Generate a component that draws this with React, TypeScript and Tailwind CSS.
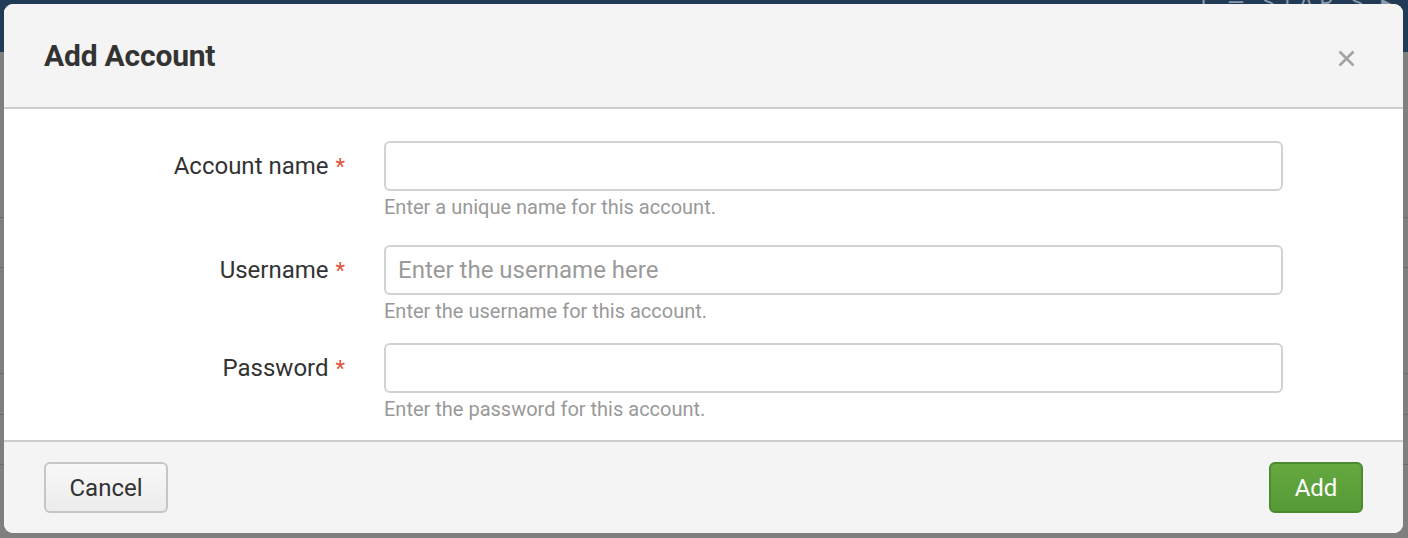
const fields = [
  {
    label: 'Account name',
    placeholder: '',
    help: 'Enter a unique name for this account.',
    gap: 'mb-[28px]',
  },
  {
    label: 'Username',
    placeholder: 'Enter the username here',
    help: 'Enter the username for this account.',
    gap: 'mb-[22px]',
  },
  {
    label: 'Password',
    placeholder: '',
    help: 'Enter the password for this account.',
    gap: '',
  },
]

function Backdrop() {
  return (
    <div className="flex h-full flex-col">
      <div className="relative h-[52px] bg-[#213a55]">
        <span className="absolute right-[10px] top-[-14px] text-[22px] tracking-[6px] text-[#8c9aab]">
          T — STAR S ▸
        </span>
      </div>
      <div className="flex-1 bg-[#7f7f7f]">
        <div className="h-[166px] border-b border-[#6c6c6c]" />
        <div className="h-[50px] border-b border-[#6c6c6c] text-[22px] leading-[50px] text-[#111] -ml-[8px]">
          t
        </div>
        <div className="h-[106px] border-b border-[#6c6c6c]" />
        <div className="h-[41px] border-b border-[#6c6c6c]" />
        <div className="h-[50px] border-b border-[#6c6c6c]" />
      </div>
    </div>
  )
}

export default function App() {
  return (
    <div
      className="relative h-[538px] w-full overflow-hidden"
      style={{ fontFamily: 'Roboto, "Liberation Sans", sans-serif' }}
    >
      <Backdrop />

      <div className="absolute left-[4px] top-[4px] flex h-[529px] w-[1399px] flex-col overflow-hidden rounded-[9px] bg-white">
        <div className="flex h-[105px] items-center justify-between border-b-2 border-[#cdcdcd] bg-[#f4f4f4] pl-[40px] pr-[48px]">
          <h2 className="text-[30px] font-bold tracking-[-0.2px] text-[#333]">Add Account</h2>
          <button className="mt-[6px]" aria-label="Close">
            <svg width="17" height="17" viewBox="0 0 17 17">
              <path d="M1.5 1.5 L15.5 15.5 M15.5 1.5 L1.5 15.5" stroke="#a3a3a3" strokeWidth="2.6" />
            </svg>
          </button>
        </div>

        <div className="h-[331px] pt-[32px]">
          {fields.map((f) => (
            <div key={f.label} className={`flex ${f.gap}`}>
              <div className="flex h-[50px] w-[341px] items-center justify-end gap-[7px] text-[24px] text-[#333]">
                <span>{f.label}</span>
                <span className="text-[22px] text-[#e0533a]">*</span>
              </div>
              <div className="ml-[39px] w-[899px]">
                <input
                  className="h-[50px] w-full rounded-[6px] border-2 border-[#d2d2d2] bg-white px-[12px] text-[24px] text-[#333] outline-none placeholder:text-[#9a9a9a]"
                  placeholder={f.placeholder}
                />
                <p className="mt-[6px] text-[20px] leading-[20px] text-[#999]">{f.help}</p>
              </div>
            </div>
          ))}
        </div>

        <div className="flex h-[93px] items-center justify-between border-t-2 border-[#cdcdcd] bg-[#f4f4f4] px-[40px]">
          <button className="h-[51px] w-[124px] rounded-[6px] border-2 border-[#c6c6c6] bg-gradient-to-b from-[#f8f8f8] to-[#ececec] text-[24px] text-[#333]">
            Cancel
          </button>
          <button className="h-[51px] w-[94px] rounded-[6px] border-2 border-[#4c8a2f] bg-gradient-to-b from-[#65a840] to-[#569a36] text-[24px] text-white">
            Add
          </button>
        </div>
      </div>
    </div>
  )
}
